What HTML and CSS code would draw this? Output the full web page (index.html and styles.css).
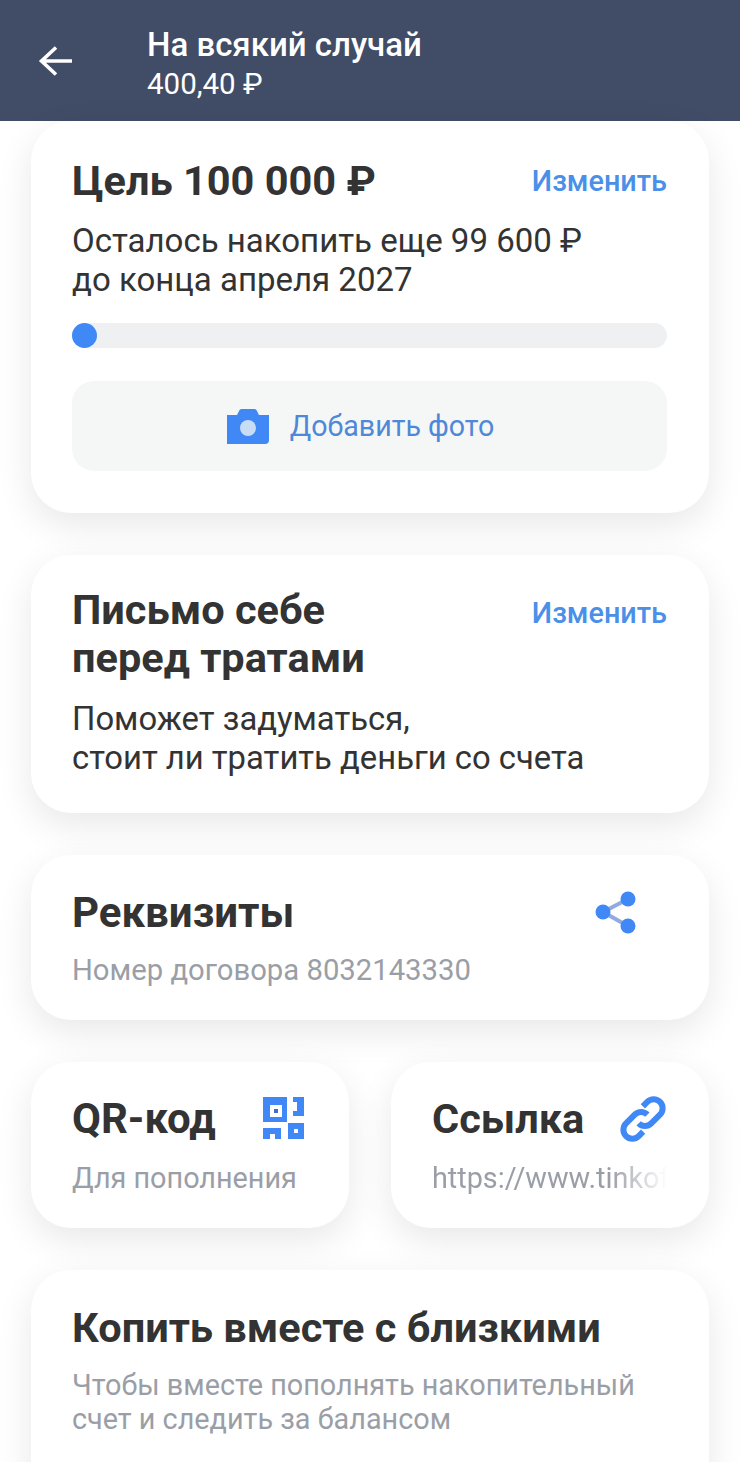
FILE: index.html
```html
<!DOCTYPE html>
<html lang="ru">
<head>
    <meta charset="utf-8">
    <meta name="viewport" content="width=device-width, initial-scale=1.0">
    <title>На всякий случай</title>
    <link rel="stylesheet" href="styles.css">
</head>
<body>
    <div class="header">
        <svg class="backIcon" viewBox="0 0 36 32" width="36" height="32">
            <path d="M34 16H4M18 2.500 3.500 16 18 29.500" fill="none" stroke="#fff" stroke-width="3.600"/>
        </svg>
        <div class="headerText">
            <div class="headerTitle">На всякий случай</div>
            <div class="headerSum">400,40 ₽</div>
        </div>
    </div>
    <div class="content">
        <div class="card goalCard">
            <div class="cardTop">
                <h3>Цель 100 000 ₽</h3>
                <span class="editLink">Изменить</span>
            </div>
            <p class="cardText goalText">Осталось накопить еще 99 600 ₽<br>до конца апреля 2027</p>
            <div class="progress"><div class="progressDot"></div></div>
            <div class="addPhoto">
                <svg viewBox="0 0 42 35" width="42" height="35">
                    <path d="M0 6h10l2-4a3 3 0 0 1 3-2h12a3 3 0 0 1 3 2l2 4h10v25a4 4 0 0 1-4 4H0z" fill="#3f88f5"/>
                    <circle cx="21" cy="19" r="8" fill="#c9dcf5"/>
                </svg>
                <span>Добавить фото</span>
            </div>
        </div>
        <div class="card letterCard">
            <div class="cardTop">
                <h3>Письмо себе<br>перед тратами</h3>
                <span class="editLink letterEdit">Изменить</span>
            </div>
            <p class="cardText letterText">Поможет задуматься,<br>стоит ли тратить деньги со счета</p>
        </div>
        <div class="card detailsCard">
            <div class="cardTop">
                <h3>Реквизиты</h3>
                <svg class="shareIcon" viewBox="0 0 42 43" width="42" height="43">
                    <path d="M33 8 8 21l25 14" fill="none" stroke="#8fabe0" stroke-width="4"/>
                    <circle cx="33" cy="8" r="7.500" fill="#3f88f5"/>
                    <circle cx="8" cy="21" r="7.500" fill="#3f88f5"/>
                    <circle cx="33" cy="35" r="7.500" fill="#3f88f5"/>
                </svg>
            </div>
            <p class="cardHint detailsHint">Номер договора 8032143330</p>
        </div>
        <div class="cardRow">
            <div class="card smallCard">
                <div class="cardTop">
                    <h3 class="qrTitle">QR-код</h3>
                    <svg class="qrIcon" viewBox="0 0 41 42" width="41" height="42">
                        <path fill-rule="evenodd" d="M0 0h24v25H0zM7 8v12h12V8z" fill="#3f88f5"/>
                        <rect x="11" y="12" width="4" height="4" fill="#3f6fc0"/>
                        <path d="M30 0h11v19H30v-5h4V5h-4z" fill="#3f88f5"/>
                        <path d="M0 31h18v11h-6v-5H7v5H0z" fill="#3f88f5"/>
                        <path fill-rule="evenodd" d="M25 26h16v16H25zM31 32v4h4v-4z" fill="#3f88f5"/>
                    </svg>
                </div>
                <p class="cardHint">Для пополнения</p>
            </div>
            <div class="card smallCard">
                <div class="cardTop">
                    <h3>Ссылка</h3>
                    <svg class="linkIcon" viewBox="2 2 42 42" width="46" height="46">
                        <g fill="none" stroke="#3f88f5" stroke-width="5.500">
                            <path d="M19 27a8 8 0 0 0 11.500 0l8-8a8.200 8.200 0 0 0-11.600-11.600l-4 4"/>
                            <path d="M27 19a8 8 0 0 0-11.500 0l-8 8a8.200 8.200 0 0 0 11.600 11.600l4-4"/>
                        </g>
                    </svg>
                </div>
                <div class="linkHint">https://www.tinkoff.ru/sl/</div>
            </div>
        </div>
        <div class="card familyCard">
            <h3>Копить вместе с близкими</h3>
            <p class="cardHint familyHint">Чтобы вместе пополнять накопительный<br>счет и следить за балансом</p>
        </div>
    </div>
</body>
</html>
```

FILE: styles.css
```css
body {
    font-family: Roboto, Arial, sans-serif;
    background-color: #fff;
    color: #333;
    margin: 0;
    height: 1462px;
    overflow: hidden;
}
.header {
    background-color: #414c66;
    color: #fff;
    height: 121px;
    box-sizing: border-box;
    display: flex;
    align-items: center;
    padding: 6px 0 0 38px;
}
.backIcon {
    margin: -6px 73px 0 0;
}
.headerTitle {
    font-size: 33px;
    font-weight: 500;
    line-height: 40px;
}
.headerSum {
    font-size: 29.500px;
    line-height: 38px;
}
.content {
    padding: 0 31px;
    display: flex;
    flex-direction: column;
    gap: 42px;
}
.card {
    background-color: #fff;
    border-radius: 40px;
    padding: 33px 42px 0 41px;
    box-sizing: border-box;
    box-shadow: 0 12px 36px rgba(0,0,0,0.095);
}
.cardTop {
    display: flex;
    justify-content: space-between;
    align-items: flex-start;
}
h3 {
    margin: 0;
    font-size: 41.500px;
    font-weight: 700;
    line-height: 50px;
}
.editLink {
    color: #4a8fe8;
    font-size: 28.800px;
    font-weight: 500;
    line-height: 50px;
}
.cardText {
    margin: 0;
    font-size: 32.800px;
    line-height: 39px;
}
.goalCard {
    height: 392px;
    padding-top: 35px;
}
.goalText {
    margin-top: 15px;
    font-size: 33px;
}
.progress {
    margin-top: 24px;
    height: 25px;
    border-radius: 13px;
    background-color: #eff0f2;
}
.progressDot {
    width: 25px;
    height: 25px;
    border-radius: 50%;
    background-color: #3f88f5;
}
.addPhoto {
    margin-top: 33px;
    height: 90px;
    border-radius: 22px;
    background-color: #f5f7f7;
    color: #4f88d8;
    font-size: 28.600px;
    display: flex;
    align-items: center;
    justify-content: center;
    gap: 21px;
    padding-right: 18px;
}
.letterCard {
    height: 258px;
    padding-top: 31px;
}
.letterCard h3 {
    line-height: 48px;
}
.letterEdit {
    margin-top: 2px;
}
.letterText {
    margin-top: 18px;
}
.detailsCard {
    height: 165px;
}
.detailsCard h3, .qrTitle {
    font-size: 42px;
}
.shareIcon {
    margin: 3px 30px 0 0;
}
.cardHint {
    margin: 17px 0 0;
    font-size: 28.800px;
    line-height: 34px;
    color: #9a9ea6;
}
.detailsHint {
    margin-top: 15px;
    font-size: 29.250px;
}
.cardRow {
    display: flex;
    gap: 42px;
}
.smallCard {
    flex: 1;
    min-width: 0;
    height: 166px;
    padding-top: 32px;
}
.qrIcon {
    margin: 3px 3px 0 0;
}
.linkIcon {
    margin: 2px 1px 0 0;
}
.linkHint {
    margin-top: 17px;
    font-size: 28.800px;
    line-height: 34px;
    color: #9a9ea6;
    white-space: nowrap;
    overflow: hidden;
    -webkit-mask-image: linear-gradient(to right, #000 76%, transparent 100%);
    mask-image: linear-gradient(to right, #000 76%, transparent 100%);
}
.familyCard {
    height: 260px;
}
.familyHint {
    margin-top: 15px;
}
```
